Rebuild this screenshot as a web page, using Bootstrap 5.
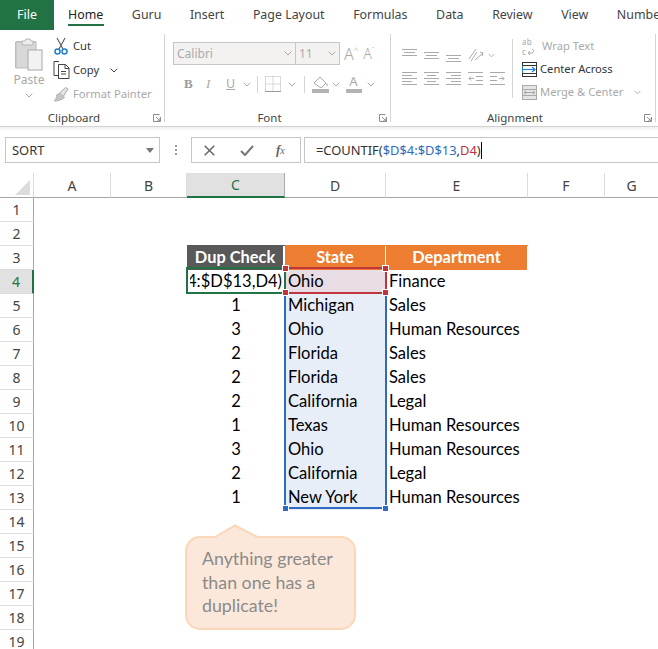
<!doctype html>
<html lang="en">
<head>
<meta charset="utf-8">
<title>COUNTIF duplicate check</title>
<link href="https://cdn.jsdelivr.net/npm/bootstrap@5.3.0/dist/css/bootstrap.min.css" rel="stylesheet">
<style>
html,body{margin:0;height:649px;overflow:hidden;background:#fff}
body{font-family:"Noto Sans","Open Sans",sans-serif;width:658px;position:relative;color:#444}
svg{display:block;flex:none}
.tabbar{height:30px;white-space:nowrap;overflow:hidden;font-size:12.4px}
.tab-file{width:54px;height:30px;background:#217346;color:#fff;line-height:29px;text-align:center;flex:none}
.tab-item{margin-left:14.3px;margin-right:14.3px;line-height:29px;height:30px;color:#444;flex:none}
.tab-item.on{color:#222;position:relative}
.tab-item.on::after{content:"";position:absolute;left:0;right:-1px;bottom:4px;height:2px;background:#217346}
.ribbon{height:97px;border-bottom:1px solid #d2d2d2;box-shadow:0 2px 3px #eee;font-size:11.2px}
.rgroup{height:92px;margin-top:4px;position:relative;flex:none}
.rgroup::after{content:"";position:absolute;right:0;top:0;width:1px;height:88px;background:#d4d4d4}
.rbody{height:76px}
.rfoot{position:absolute;left:0;right:0;top:76px;height:16px;font-size:11.5px;line-height:16px;text-align:center;padding-right:17px;color:#444}
.launch{position:absolute;right:4px;bottom:4px}
.dis{color:#a9a9a9}
.cmd{height:24px;gap:3px;white-space:nowrap}
.cmd-tight{height:23px}
.ibox{height:23px;border:1px solid #c6c6c6;background:#f3f2f1;color:#aaa;font-size:12px;line-height:21px;padding-left:3px}
.wrapico{width:17px;font-size:8px;line-height:10px;letter-spacing:.3px}
.fbar{height:26px;margin-top:10px;padding-left:5px;gap:0}
.fbox{height:26px;background:#fff;border:1px solid #c6c6c6;font-size:12.9px;line-height:24px;color:#333;flex:none}
.sheet{position:absolute;left:0;top:173px;width:658px;height:476px;overflow:hidden}
.sgrid{border-collapse:separate;border-spacing:0;table-layout:fixed;width:658px;font-family:Lato,"Liberation Sans",sans-serif;font-size:16.55px;color:#000}
.sgrid th,.sgrid td{height:24px;padding:0;white-space:nowrap;overflow:hidden;line-height:23px;font-weight:400}
.sgrid td{padding-bottom:2px;line-height:20px}
.colh th{border-right:1px solid #dcdcdc;border-bottom:1px solid #a6a6a6;text-align:center;font-family:"Noto Sans",sans-serif;font-size:14px;color:#444;background:#fff}
.colh th.cur{background:#e1e1e1;color:#217346;border-bottom:2px solid #217346;border-right-color:#aaa}
.rowh{border-right:1px solid #a6a6a6;border-bottom:1px solid #dcdcdc;text-align:center;font-family:"Noto Sans",sans-serif;color:#444}
.sgrid .rowh{font-size:14px}
.rowh.cur{background:#e1e1e1;color:#217346;border-right:2px solid #217346}
.sgrid .hd{color:#fff;font-weight:700;text-align:center;font-size:16.4px;border-right:1px solid #fff}
.hd-dark{background:#595959;box-shadow:0 -1px 0 #595959;border-right-width:2px!important}
.hd-or{background:#ed7d31;box-shadow:0 -1px 0 #ed7d31}
.num{text-align:center}
.sgrid .txt{padding-left:3px}
.dpink{background:#e8dde4}
.dblue{background:#e8eef8}
.clip-edit{display:flex;justify-content:flex-end;overflow:hidden;padding-right:3px;margin-left:3px}
.ov{position:absolute;pointer-events:none}
.sel-c{left:186px;top:94px;width:100px;height:27px;border:2px solid #217346}
.sel-r{left:284px;top:94px;width:103px;height:27px;border:2px solid #c0343c}
.sel-b{left:284px;top:120px;width:103px;height:216px;border:2px solid #2f6bc0;border-top:0}
.hnd{width:7px;height:7px;border:1px solid #fff}
.hnd-r{background:#c0343c}
.hnd-b{background:#2f6bc0}
.bubble{left:184px;top:351px;width:174px;height:107px}
.bubble-t{left:202px;top:374px;width:154px;font-family:Lato,"Liberation Sans",sans-serif;font-size:17.8px;line-height:23.6px;color:#8a8a8a}
.b{color:#2f6bc0}.r{color:#c0343c}
</style>
</head>
<body>
<svg width="0" height="0" style="position:absolute">
<symbol id="ch" viewBox="0 0 8 5"><path d="M.7.7 4 4 7.3.7" fill="none" stroke="currentColor" stroke-width="1"/></symbol>
<symbol id="ln" viewBox="0 0 8 8"><path d="M.5.5h6M.5.5v7h7V3M3 3l4 4M4 7h3V4" fill="none" stroke="#8c8c8c" stroke-width="1"/></symbol>
</svg>

<div class="tabbar d-flex">
  <div class="tab-file">File</div>
  <div class="tab-item on" style="margin-left:14px">Home</div>
  <div class="tab-item">Guru</div>
  <div class="tab-item">Insert</div>
  <div class="tab-item">Page Layout</div>
  <div class="tab-item">Formulas</div>
  <div class="tab-item">Data</div>
  <div class="tab-item">Review</div>
  <div class="tab-item">View</div>
  <div class="tab-item">Number</div>
</div>

<div class="ribbon d-flex">
  <!-- Clipboard -->
  <div class="rgroup" style="width:165px">
    <div class="rbody d-flex">
      <div class="d-flex flex-column align-items-center dis" style="width:30px;margin-left:14px;font-size:12px">
        <svg width="28" height="33" viewBox="0 0 28 33" style="margin-top:4px"><path d="M1 4h6M21 4h-2v3M1 4v25h12" fill="none" stroke="#bcbcbc" stroke-width="2"/><rect x="1" y="4" width="20" height="26" fill="#d8d8d8" stroke="#bcbcbc"/><path d="M7 6V3h3l1-2h4l1 2h2v4H7z" fill="#eee" stroke="#b5b5b5"/><rect x="13" y="12" width="14" height="20" fill="#f2f2f2" stroke="#a8a8a8"/></svg>
        <div style="line-height:16px;margin-top:1px">Paste</div>
        <svg width="8" height="5" style="margin-top:5px"><use href="#ch"/></svg>
      </div>
      <div class="d-flex flex-column" style="margin-left:9px">
        <div class="d-flex align-items-center cmd" style="color:#333">
          <svg width="16" height="20" viewBox="0 0 16 20"><path d="M4 2 10 13M12 2 6 13" stroke="#555" stroke-width="1.1" fill="none"/><circle cx="4.500" cy="15.500" r="2.500" fill="none" stroke="#1e7fd0" stroke-width="1.500"/><circle cx="11.500" cy="15.500" r="2.500" fill="none" stroke="#1e7fd0" stroke-width="1.500"/></svg>
          <span style="margin-left:1px">Cut</span>
        </div>
        <div class="d-flex align-items-center cmd" style="color:#333">
          <svg width="17" height="18" viewBox="0 0 17 18"><path d="M6 .5H1v14h4" fill="none" stroke="#444"/><path d="M5.500 3.500h7l3.500 3.500v10.500h-10.500z" fill="#fff" stroke="#444"/><path d="M12 3.500V7.500h4M8 10.500h5M8 13h5" fill="none" stroke="#444"/></svg>
          <span>Copy</span>
          <svg width="8" height="5" style="margin-left:8px;color:#444"><use href="#ch"/></svg>
        </div>
        <div class="d-flex align-items-center cmd dis">
          <svg width="17" height="17" viewBox="0 0 17 17"><path d="M1 15c2-2 3-4 2.500-6l4-2.500 4 5c-2 2-7 4-10.500 3.500z" fill="#c4c4c4" stroke="#aaa" stroke-width=".8"/><path d="M7 6.500 12.500 1.500 15 3 10.500 10" fill="#e4e4e4" stroke="#aaa"/></svg>
          <span>Format Painter</span>
        </div>
      </div>
    </div>
    <div class="rfoot">Clipboard</div>
    <svg class="launch" width="8" height="8"><use href="#ln"/></svg>
  </div>

  <!-- Font -->
  <div class="rgroup" style="width:226px;padding-left:8px">
    <div class="d-flex align-items-center" style="height:23px;margin-top:8px">
      <div class="ibox d-flex align-items-center justify-content-between" style="width:123px;padding-right:3px"><span>Calibri</span><svg width="8" height="5" class="dis"><use href="#ch"/></svg></div>
      <div class="ibox d-flex align-items-center justify-content-between" style="width:44px;border-left:0;padding-right:3px"><span>11</span><svg width="8" height="5" class="dis"><use href="#ch"/></svg></div>
      <div class="dis d-flex" style="margin-left:4px;font-size:16px;line-height:20px;font-weight:300;gap:5px"><span>A<sup style="font-size:8px;top:-.8em">^</sup></span><span style="font-size:14px">A<sup style="font-size:8px;top:-.8em">ˇ</sup></span></div>
    </div>
    <div class="d-flex align-items-center dis" style="height:24px;margin-top:7px;margin-left:11px">
      <b style="width:22px;font-family:'Liberation Serif',serif;font-size:13px;color:#9a9a9a">B</b>
      <i style="width:20px;font-family:'Liberation Serif',serif;font-size:13px">I</i>
      <u style="width:17px;font-size:12.5px">U</u>
      <svg width="8" height="5"><use href="#ch"/></svg>
      <div style="width:1px;height:17px;background:#d4d4d4;margin:0 7px 0 6px"></div>
      <svg width="16" height="16" viewBox="0 0 16 16"><path d="M.5.500h15v15M.5.500v15M8 .5v15M.5 8h15" fill="none" stroke="#b5b5b5" stroke-dasharray="1 1"/><path d="M0 15.500h16" stroke="#999"/></svg>
      <svg width="8" height="5" style="margin-left:7px"><use href="#ch"/></svg>
      <div style="width:1px;height:17px;background:#d4d4d4;margin:0 7px 0 8px"></div>
      <svg width="17" height="18" viewBox="0 0 17 18"><path d="M2 8 8 2l6 6-5 5z" fill="#fff" stroke="#aaa"/><path d="M15 8c1 1.500 1 3 0 3s-1-1.500 0-3z" fill="#aaa"/><rect x="0" y="14" width="17" height="4" fill="#b3b3b3"/></svg>
      <svg width="8" height="5" style="margin-left:3px"><use href="#ch"/></svg>
      <div class="d-flex flex-column align-items-center" style="width:17px;margin-left:5px"><span style="font-size:13px;line-height:13px">A</span><div style="width:16px;height:4px;background:#b3b3b3;margin-top:1px"></div></div>
      <svg width="8" height="5" style="margin-left:5px"><use href="#ch"/></svg>
    </div>
    <div class="rfoot">Font</div>
    <svg class="launch" width="8" height="8"><use href="#ln"/></svg>
  </div>

  <!-- Alignment -->
  <div class="rgroup" style="width:265px;padding-left:11px">
    <div class="d-flex rbody">
      <div class="d-flex flex-column" style="width:110px;margin-top:13px;gap:7px">
        <div class="d-flex align-items-center" style="gap:7px;height:16px">
          <svg width="15" height="14" viewBox="0 0 15 14"><path d="M0 1.500h15M2 4.500h11M0 7.500h15" stroke="#aaa"/></svg>
          <svg width="15" height="14" viewBox="0 0 15 14"><path d="M0 4.500h15M2 7.500h11M0 10.500h15" stroke="#aaa"/></svg>
          <svg width="15" height="14" viewBox="0 0 15 14"><path d="M0 7.500h15M2 10.500h11M0 13.500h15" stroke="#aaa"/></svg>
          <svg width="17" height="16" viewBox="0 0 17 16"><path d="M1 12 8 2M3 14 9 5M7 13l8-7M12 5l3 1-1 3" fill="none" stroke="#aaa"/></svg>
          <svg width="7" height="5" class="dis" style="margin-left:-4px"><use href="#ch"/></svg>
        </div>
        <div class="d-flex align-items-center" style="gap:7px;height:16px">
          <svg width="15" height="14" viewBox="0 0 15 14"><path d="M0 1.500h15M0 4.500h10M0 7.500h15M0 10.500h10M0 13.500h15" stroke="#aaa"/></svg>
          <svg width="15" height="14" viewBox="0 0 15 14"><path d="M0 1.500h15M3 4.500h9M0 7.500h15M3 10.500h9M0 13.500h15" stroke="#aaa"/></svg>
          <svg width="15" height="14" viewBox="0 0 15 14"><path d="M0 1.500h15M5 4.500h10M0 7.500h15M5 10.500h10M0 13.500h15" stroke="#aaa"/></svg>
          <svg width="15" height="14" viewBox="0 0 15 14"><path d="M0 1.500h15M8 5.500h7M8 9.500h7M0 13.500h15M6 7.500H1M3 5.500l-2 2 2 2" fill="none" stroke="#aaa"/></svg>
          <svg width="15" height="14" viewBox="0 0 15 14"><path d="M0 1.500h15M0 5.500h7M0 9.500h7M0 13.500h15M9 7.500h5M12 5.500l2 2-2 2" fill="none" stroke="#aaa"/></svg>
        </div>
      </div>
      <div style="width:1px;height:59px;background:#d4d4d4;margin-top:5px"></div>
      <div class="d-flex flex-column" style="margin-left:9px;margin-top:1px">
        <div class="d-flex align-items-center cmd cmd-tight dis">
          <div class="wrapico"><div>ab</div><div class="d-flex align-items-center">c<svg width="9" height="8" viewBox="0 0 9 8"><path d="M6 1c2 0 2 4 0 4H2M4 3 2 5l2 2" fill="none" stroke="#aaa"/></svg></div></div>
          <span>Wrap Text</span>
        </div>
        <div class="d-flex align-items-center cmd cmd-tight" style="color:#333">
          <svg width="15" height="15" viewBox="0 0 15 15"><rect x=".5" y=".5" width="14" height="14" fill="#fff" stroke="#333"/><path d="M0 3.500h15M0 11.500h15" stroke="#333"/><path d="M1 7.500h12M10 5l3 2.500-3 2.500" fill="none" stroke="#1e7fd0" stroke-width="1.200"/><path d="M.5 4v7" stroke="#1e7fd0"/></svg>
          <span>Center Across</span>
        </div>
        <div class="d-flex align-items-center cmd cmd-tight dis">
          <svg width="15" height="15" viewBox="0 0 15 15"><rect x=".5" y=".5" width="14" height="14" fill="#e4e4e4" stroke="#aaa"/><path d="M0 4.500h15M0 10.500h15" stroke="#aaa"/><path d="M2 7.500h11M4 6 2 7.500 4 9M11 6l2 1.500L11 9" fill="none" stroke="#aaa"/></svg>
          <span>Merge &amp; Center</span>
          <svg width="7" height="5" style="margin-left:8px"><use href="#ch"/></svg>
        </div>
      </div>
    </div>
    <div class="rfoot">Alignment</div>
    <svg class="launch" width="8" height="8"><use href="#ln"/></svg>
  </div>
</div>

<!-- Formula bar -->
<div class="fbar d-flex">
  <div class="fbox d-flex align-items-center justify-content-between" style="width:155px;padding:0 5px 0 6px"><span>SORT</span><svg width="8" height="5" viewBox="0 0 8 5"><path d="M0 0h8L4 5z" fill="#777"/></svg></div>
  <div class="d-flex flex-column justify-content-center align-items-center flex-shrink-0" style="width:31px;gap:2px">
    <i style="width:2px;height:2px;background:#999"></i><i style="width:2px;height:2px;background:#999"></i><i style="width:2px;height:2px;background:#999"></i>
  </div>
  <div class="fbox d-flex align-items-center" style="width:110px;padding-left:12px">
    <svg width="11" height="11" viewBox="0 0 11 11"><path d="M.7.7l9.600 9.600M10.300.7.7 10.300" stroke="#666" stroke-width="1.500"/></svg>
    <svg width="14" height="11" viewBox="0 0 14 11" style="margin-left:25px"><path d="M1 6l4 4 8-9" fill="none" stroke="#777" stroke-width="2"/></svg>
    <span style="margin-left:22px;font-family:'Liberation Serif',serif;font-style:italic;font-size:13px;color:#666"><b>f</b><span style="font-size:10px">x</span></span>
  </div>
  <div class="fbox" style="width:354px;margin-left:3px;padding-left:11px;border-right:0">=COUNTIF(<span class="b">$D$4:$D$13</span>,<span class="r">D4</span>)<span style="display:inline-block;width:1px;height:17px;background:#000;vertical-align:-4px"></span></div>
</div>

<!-- Sheet -->
<div class="sheet">
  <table class="sgrid">
    <colgroup><col style="width:34px"><col style="width:77px"><col style="width:76px"><col style="width:98px"><col style="width:101px"><col style="width:142px"><col style="width:77px"><col style="width:53px"></colgroup>
    <thead>
      <tr class="colh">
        <th><svg width="15" height="15" viewBox="0 0 15 15" style="margin:4px 0 0 15px"><path d="M15 0v15H0z" fill="#dcdcdc"/></svg></th>
        <th>A</th><th>B</th><th class="cur">C</th><th>D</th><th>E</th><th>F</th><th style="border-right:0">G</th>
      </tr>
    </thead>
    <tbody>
      <tr><th class="rowh">1</th><td colspan="7"></td></tr>
      <tr><th class="rowh">2</th><td colspan="7"></td></tr>
      <tr><th class="rowh">3</th><td></td><td></td><td class="hd hd-dark">Dup Check</td><td class="hd hd-or">State</td><td class="hd hd-or">Department</td><td></td><td></td></tr>
      <tr><th class="rowh cur">4</th><td></td><td></td><td><div class="clip-edit">$D$4:$D$13,D4)</div></td><td class="txt dpink">Ohio</td><td class="txt">Finance</td><td></td><td></td></tr>
      <tr><th class="rowh">5</th><td></td><td></td><td class="num">1</td><td class="txt dblue">Michigan</td><td class="txt">Sales</td><td></td><td></td></tr>
      <tr><th class="rowh">6</th><td></td><td></td><td class="num">3</td><td class="txt dblue">Ohio</td><td class="txt">Human Resources</td><td></td><td></td></tr>
      <tr><th class="rowh">7</th><td></td><td></td><td class="num">2</td><td class="txt dblue">Florida</td><td class="txt">Sales</td><td></td><td></td></tr>
      <tr><th class="rowh">8</th><td></td><td></td><td class="num">2</td><td class="txt dblue">Florida</td><td class="txt">Sales</td><td></td><td></td></tr>
      <tr><th class="rowh">9</th><td></td><td></td><td class="num">2</td><td class="txt dblue">California</td><td class="txt">Legal</td><td></td><td></td></tr>
      <tr><th class="rowh">10</th><td></td><td></td><td class="num">1</td><td class="txt dblue">Texas</td><td class="txt">Human Resources</td><td></td><td></td></tr>
      <tr><th class="rowh">11</th><td></td><td></td><td class="num">3</td><td class="txt dblue">Ohio</td><td class="txt">Human Resources</td><td></td><td></td></tr>
      <tr><th class="rowh">12</th><td></td><td></td><td class="num">2</td><td class="txt dblue">California</td><td class="txt">Legal</td><td></td><td></td></tr>
      <tr><th class="rowh">13</th><td></td><td></td><td class="num">1</td><td class="txt dblue">New York</td><td class="txt">Human Resources</td><td></td><td></td></tr>
      <tr><th class="rowh">14</th><td colspan="7"></td></tr>
      <tr><th class="rowh">15</th><td colspan="7"></td></tr>
      <tr><th class="rowh">16</th><td colspan="7"></td></tr>
      <tr><th class="rowh">17</th><td colspan="7"></td></tr>
      <tr><th class="rowh">18</th><td colspan="7"></td></tr>
      <tr><th class="rowh">19</th><td colspan="7"></td></tr>
    </tbody>
  </table>

  <div class="ov sel-b"></div>
  <div class="ov sel-r"></div>
  <div class="ov sel-c"></div>
  <div class="ov hnd hnd-r" style="left:282px;top:92px"></div>
  <div class="ov hnd hnd-r" style="left:382px;top:92px"></div>
  <div class="ov hnd hnd-r" style="left:282px;top:116px"></div>
  <div class="ov hnd hnd-r" style="left:382px;top:116px"></div>
  <div class="ov hnd hnd-b" style="left:282px;top:332px"></div>
  <div class="ov hnd hnd-b" style="left:382px;top:332px"></div>

  <svg class="ov bubble" viewBox="0 0 174 107"><path d="M16 13H31L51 1.500 73 13H157a14 14 0 0 1 14 14V91a14 14 0 0 1-14 14H16a14 14 0 0 1-14-14V27a14 14 0 0 1 14-14z" fill="#fce8da" stroke="#fad7b8" stroke-width="2"/></svg>
  <div class="ov bubble-t">Anything greater<br>than one has a<br>duplicate!</div>
</div>
<script src="https://cdn.jsdelivr.net/npm/bootstrap@5.3.0/dist/js/bootstrap.bundle.min.js"></script>
</body>
</html>
